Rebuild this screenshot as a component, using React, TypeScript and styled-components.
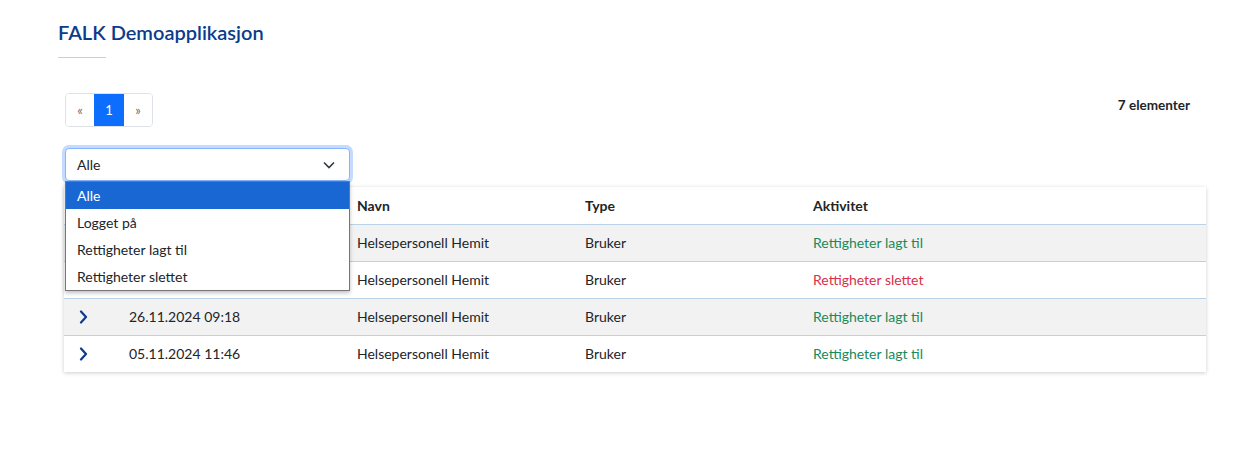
import * as React from 'react';
import styled, { createGlobalStyle } from 'styled-components';

const GlobalStyle = createGlobalStyle`
    html, body {
        margin: 0;
        padding: 0;
        background: #FFFFFF;
        font-family: Lato, "Noto Sans", sans-serif;
        color: #212529;
    }
`

const Page = styled.div`
    width: 1257px;
    height: 471px;
    padding: 19px 0 0 58px;
    box-sizing: border-box;
`

const Title = styled.h1`
    margin: 0;
    font-size: 20px;
    font-weight: 600;
    line-height: 26px;
    color: #0b3c8c;
`

const TitleRule = styled.div`
    width: 48px;
    height: 1px;
    margin-top: 12px;
    background: #c5cfe0;
`

const Content = styled.div`
    width: 1142px;
    margin: 35px 0 0 6px;
`

const TopBar = styled.div`
    display: flex;
    justify-content: space-between;
    align-items: flex-start;
    padding-left: 1px;
`

const Pager = styled.div`
    display: flex;
    border: 1px solid #dee2e6;
    border-radius: 4px;
    overflow: hidden;
`

const PageCell = styled.div<{ active?: boolean }>`
    width: ${p => (p.active ? 30 : 28)}px;
    height: 32px;
    display: flex;
    align-items: center;
    justify-content: center;
    font-size: 13px;
    color: ${p => (p.active ? '#FFFFFF' : '#6c757d')};
    background: ${p => (p.active ? '#0d6efd' : '#FFFFFF')};
`

const Count = styled.div`
    margin: 4px 16px 0 0;
    font-size: 13.5px;
    font-weight: 700;
    color: #212529;
`

const FilterWrap = styled.div`
    position: relative;
    width: 285px;
    margin: 21px 0 0 1px;
    z-index: 2;
`

const SelectBox = styled.div`
    height: 31px;
    display: flex;
    align-items: center;
    justify-content: space-between;
    padding: 0 14px 0 11px;
    border: 1px solid #86b7fe;
    border-radius: 4px;
    box-shadow: 0 0 0 3px rgba(13, 110, 253, 0.25);
    font-size: 14px;
    background: #FFFFFF;
`

const OptionList = styled.ul`
    position: absolute;
    top: 33px;
    left: 0;
    right: 0;
    margin: 0;
    padding: 0;
    list-style: none;
    background: #FFFFFF;
    border: 1px solid #767676;
    box-shadow: 0 2px 4px rgba(0, 0, 0, 0.25);
`

const Option = styled.li<{ selected?: boolean }>`
    height: 27px;
    display: flex;
    align-items: center;
    padding-left: 11px;
    font-size: 14px;
    color: ${p => (p.selected ? '#FFFFFF' : '#212529')};
    background: ${p => (p.selected ? '#1967d2' : 'transparent')};
`

const Card = styled.div`
    margin-top: 6px;
    background: #FFFFFF;
    box-shadow: 0 1px 4px rgba(0, 0, 0, 0.2);
`

const Table = styled.table`
    width: 100%;
    table-layout: fixed;
    border-collapse: collapse;
    font-size: 14px;
`

const HeadCell = styled.th<{ w?: number }>`
    box-sizing: border-box;
    width: ${p => (p.w ? `${p.w}px` : 'auto')};
    height: 37px;
    padding: 0 12px;
    text-align: left;
    font-weight: 700;
    border-bottom: 1px solid #b9d3ea;
`

const Row = styled.tr<{ striped?: boolean }>`
    background: ${p => (p.striped ? '#f2f2f2' : '#FFFFFF')};
    border-bottom: 1px solid #b9d3ea;
    &:last-child {
        border-bottom: none;
    }
`

const Cell = styled.td<{ tone?: 'ok' | 'bad' }>`
    height: 36px;
    padding: 0 12px;
    white-space: nowrap;
    color: ${p => (p.tone === 'ok' ? '#188a5b' : p.tone === 'bad' ? '#dc2f4a' : '#212529')};
`

const ExpandCell = styled.td`
    height: 36px;
    padding: 0 0 0 15px;
`

const Chevron = () => (
    <svg width="9" height="14" viewBox="0 0 9 14" style={{ display: 'block' }}>
        <path d="M2 1.5 L7 7 L2 12.5" fill="none" stroke="#0b3c8c" strokeWidth="2.2" strokeLinecap="round" strokeLinejoin="round" />
    </svg>
)

const SmallChevron = () => (
    <svg width="12" height="8" viewBox="0 0 12 8">
        <path d="M1 1.5 L6 6.5 L11 1.5" fill="none" stroke="#343a40" strokeWidth="1.6" />
    </svg>
)

const rows = [
    { date: '28.11.2024 10:02', name: 'Helsepersonell Hemit', type: 'Bruker', act: 'Rettigheter lagt til', tone: 'ok' as const },
    { date: '27.11.2024 14:35', name: 'Helsepersonell Hemit', type: 'Bruker', act: 'Rettigheter slettet', tone: 'bad' as const },
    { date: '26.11.2024 09:18', name: 'Helsepersonell Hemit', type: 'Bruker', act: 'Rettigheter lagt til', tone: 'ok' as const },
    { date: '05.11.2024 11:46', name: 'Helsepersonell Hemit', type: 'Bruker', act: 'Rettigheter lagt til', tone: 'ok' as const },
]

const options = ['Alle', 'Logget på', 'Rettigheter lagt til', 'Rettigheter slettet']

export default function App() {
    return (
        <Page>
            <GlobalStyle />
            <Title>FALK Demoapplikasjon</Title>
            <TitleRule />

            <Content>
                <TopBar>
                    <Pager>
                        <PageCell>«</PageCell>
                        <PageCell active>1</PageCell>
                        <PageCell>»</PageCell>
                    </Pager>
                    <Count>7 elementer</Count>
                </TopBar>

                <FilterWrap>
                    <SelectBox>
                        <span>Alle</span>
                        <SmallChevron />
                    </SelectBox>
                    <OptionList>
                        {options.map((o, i) => (
                            <Option key={o} selected={i === 0}>{o}</Option>
                        ))}
                    </OptionList>
                </FilterWrap>

                <Card>
                    <Table>
                        <thead>
                            <tr>
                                <HeadCell w={53} />
                                <HeadCell w={228}>Tidspunkt</HeadCell>
                                <HeadCell w={228}>Navn</HeadCell>
                                <HeadCell w={228}>Type</HeadCell>
                                <HeadCell>Aktivitet</HeadCell>
                            </tr>
                        </thead>
                        <tbody>
                            {rows.map((r, i) => (
                                <Row key={i} striped={i % 2 === 0}>
                                    <ExpandCell><Chevron /></ExpandCell>
                                    <Cell>{r.date}</Cell>
                                    <Cell>{r.name}</Cell>
                                    <Cell>{r.type}</Cell>
                                    <Cell tone={r.tone}>{r.act}</Cell>
                                </Row>
                            ))}
                        </tbody>
                    </Table>
                </Card>
            </Content>
        </Page>
    )
}
